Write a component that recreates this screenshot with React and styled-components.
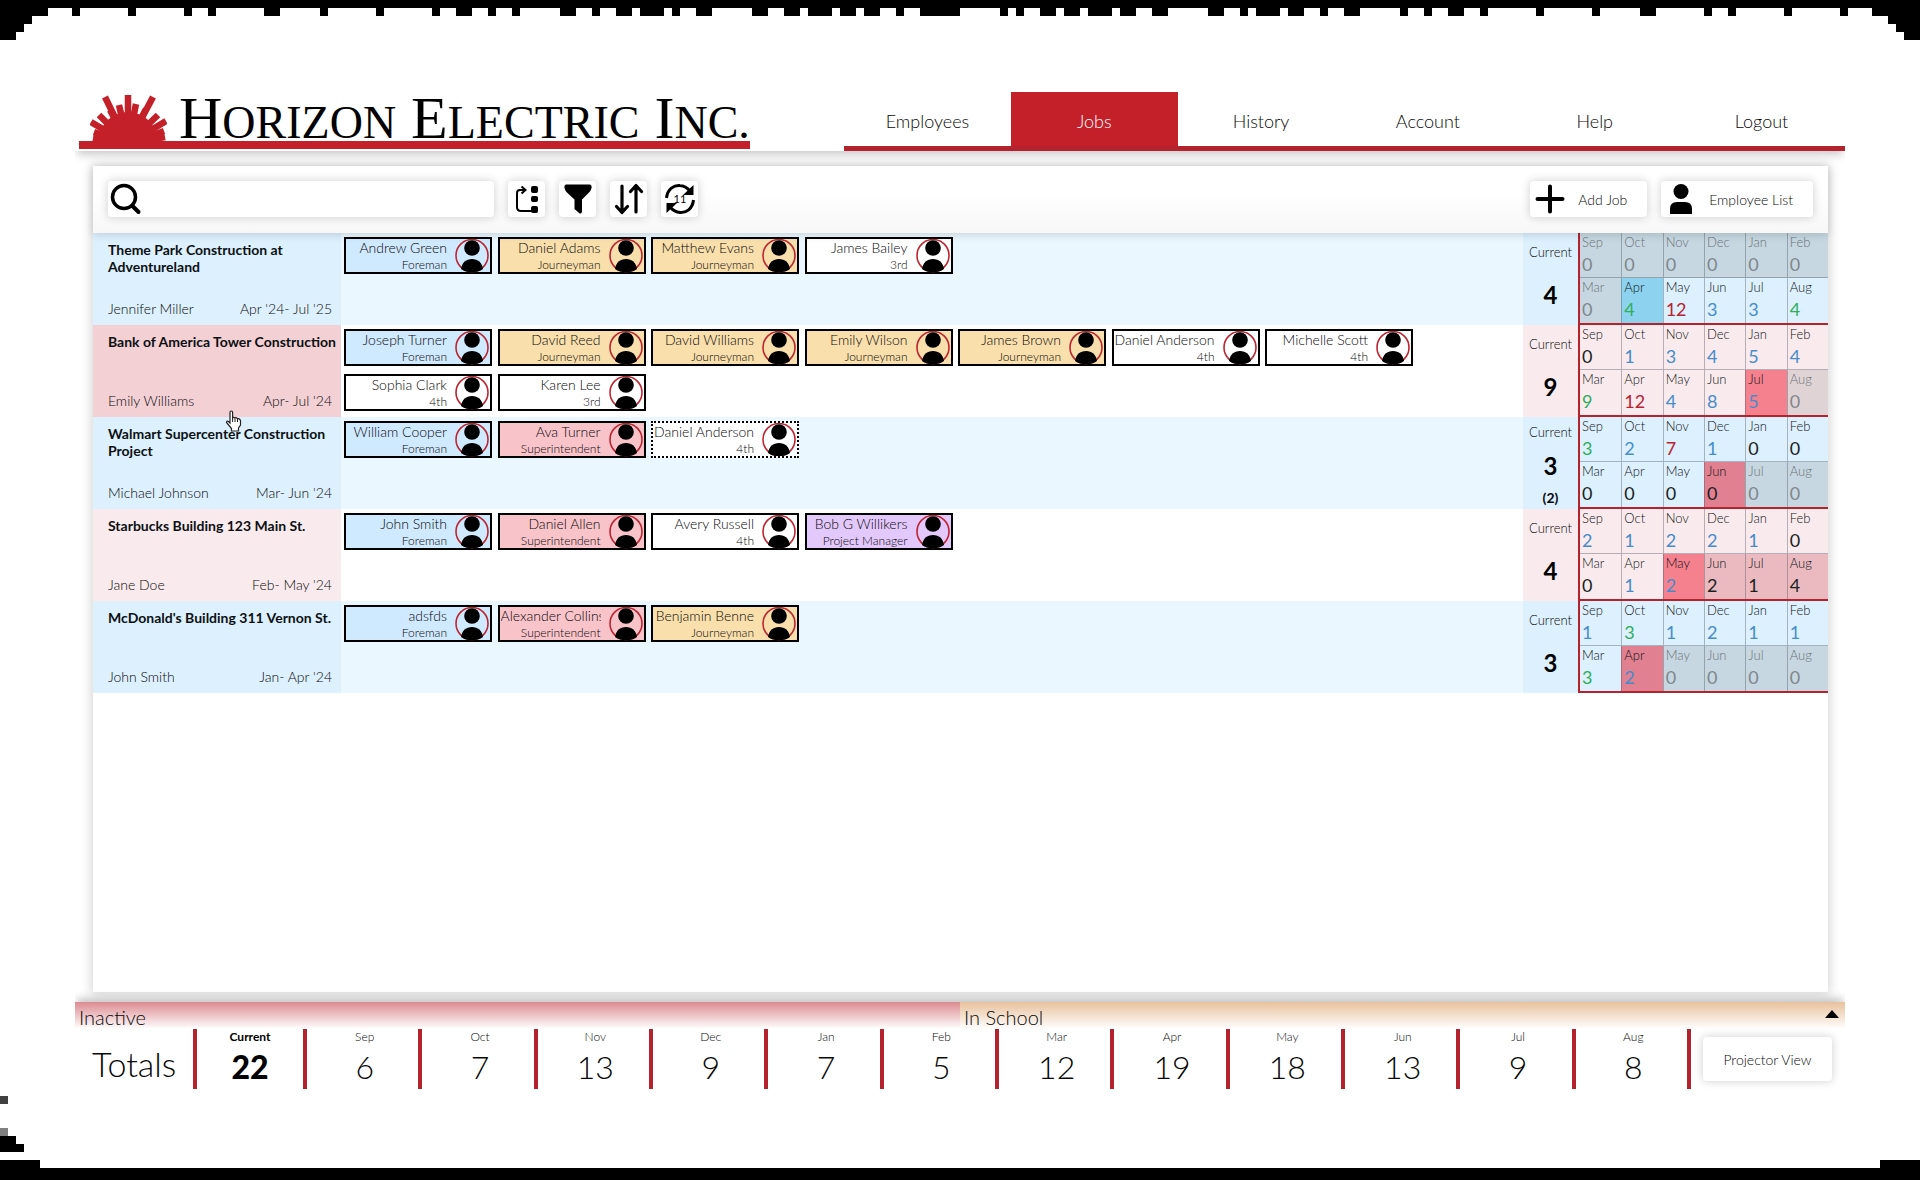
import React from "react";
import styled, { createGlobalStyle, css } from "styled-components";

const RED = "#b4232d";
const MONTHS = ["Sep", "Oct", "Nov", "Dec", "Jan", "Feb", "Mar", "Apr", "May", "Jun", "Jul", "Aug"];

const ROLE_COLORS = {
  Foreman: "#cfe9fe",
  Journeyman: "#f9dfac",
  Superintendent: "#f9c3ca",
  "Project Manager": "#e3c8fb",
};

const COUNT_COLORS = { g: "#2fae5c", b: "#468ccb", r: "#b92233", k: "#1b1f22", x: "#80878b" };

const CELL_COLORS = {
  blue: { plain: "transparent", off: "#c6d7e1", now: "#8dd3ef", end: "#e08091", after: "#c6d7e1" },
  pink: { plain: "transparent", off: "#e0d3d6", now: "#f5818f", end: "#f5818f", after: "#ebbac1" },
};

/* Each month is "count, count colour, cell kind". */
const JOBS = [
  {
    title: "Theme Park Construction at Adventureland",
    lead: "Jennifer Miller",
    dates: "Apr '24- Jul '25",
    tone: "blue",
    current: 4,
    crew: [["Andrew Green", "Foreman"], ["Daniel Adams", "Journeyman"], ["Matthew Evans", "Journeyman"], ["James Bailey", "3rd"]],
    months: "0 x off,0 x off,0 x off,0 x off,0 x off,0 x off,0 x off,4 g now,12 r plain,3 b plain,3 b plain,4 g plain",
  },
  {
    title: "Bank of America Tower Construction",
    lead: "Emily Williams",
    dates: "Apr- Jul '24",
    tone: "pink",
    hovered: true,
    current: 9,
    crew: [
      ["Joseph Turner", "Foreman"], ["David Reed", "Journeyman"], ["David Williams", "Journeyman"],
      ["Emily Wilson", "Journeyman"], ["James Brown", "Journeyman"], ["Daniel Anderson", "4th"],
      ["Michelle Scott", "4th"], ["Sophia Clark", "4th"], ["Karen Lee", "3rd"],
    ],
    months: "0 k plain,1 b plain,3 b plain,4 b plain,5 b plain,4 b plain,9 g plain,12 r plain,4 b plain,8 b plain,5 b end,0 x off",
  },
  {
    title: "Walmart Supercenter Construction Project",
    lead: "Michael Johnson",
    dates: "Mar- Jun '24",
    tone: "blue",
    current: 3,
    pending: "(2)",
    crew: [["William Cooper", "Foreman"], ["Ava Turner", "Superintendent"], ["Daniel Anderson", "4th", true]],
    months: "3 g plain,2 b plain,7 r plain,1 b plain,0 k plain,0 k plain,0 k plain,0 k plain,0 k plain,0 k end,0 x off,0 x off",
  },
  {
    title: "Starbucks Building 123 Main St.",
    lead: "Jane Doe",
    dates: "Feb- May '24",
    tone: "pink",
    current: 4,
    crew: [["John Smith", "Foreman"], ["Daniel Allen", "Superintendent"], ["Avery Russell", "4th"], ["Bob G Willikers", "Project Manager"]],
    months: "2 b plain,1 b plain,2 b plain,2 b plain,1 b plain,0 k plain,0 k plain,1 b plain,2 b end,2 k after,1 k after,4 k after",
  },
  {
    title: "McDonald's Building 311 Vernon St.",
    lead: "John Smith",
    dates: "Jan- Apr '24",
    tone: "blue",
    current: 3,
    crew: [["adsfds", "Foreman"], ["Alexander Collins", "Superintendent"], ["Benjamin Benne", "Journeyman"]],
    months: "1 b plain,3 g plain,1 b plain,2 b plain,1 b plain,1 b plain,3 g plain,2 b end,0 x off,0 x off,0 x off,0 x off",
  },
];

const TOTALS = [6, 7, 13, 9, 7, 5, 12, 19, 18, 13, 9, 8];

const GlobalStyle = createGlobalStyle`
  *, *::before, *::after { box-sizing: border-box; }
  body {
    margin: 0;
    background: #fff;
    color: #080808;
    font-family: Lato, "Open Sans", sans-serif;
    font-weight: 300;
  }
  button, input { font: inherit; color: inherit; }
`;

const Page = styled.div`
  min-height: 100vh;
  padding: 92px 75px 91px;
  display: flex;
`;

const Shell = styled.div`
  flex: 1;
  min-width: 0;
  display: flex;
  flex-direction: column;
`;

const Header = styled.header`
  display: flex;
  height: 59px;
  box-shadow: 0 6px 8px -2px rgba(0, 0, 0, 0.2);
  clip-path: inset(-20px 0);
`;

const Logo = styled.a`
  flex: none;
  display: flex;
  width: 671px;
  height: 57px;
  margin-left: 4px;
  padding-left: 11px;
  border-bottom: 8px solid #c4202a;
  color: #000;
  text-decoration: none;
`;

const LogoText = styled.span`
  margin-left: 12px;
  font: 400 60px/52px "Liberation Serif", serif;
  white-space: nowrap;
`;

const SmallCaps = styled.span`
  font-size: 46px;
`;

const Nav = styled.nav`
  flex: 1;
  margin-left: 94px;
  display: grid;
  grid-template-columns: repeat(6, 1fr);
  border-bottom: 5px solid ${RED};
`;

const NavLink = styled.a`
  display: flex;
  align-items: center;
  justify-content: center;
  padding-top: 3px;
  font-size: 18px;
  text-decoration: none;
  color: ${(p) => (p.$active ? "#fff" : "#080808")};
  background: ${(p) => (p.$active ? "#c4202a" : "transparent")};
`;

const Panel = styled.main`
  flex: 1;
  margin: 15px 17px 10px 18px;
  background: #fff;
  box-shadow: 0 0 10px 2px rgba(0, 0, 0, 0.16);
`;

const Toolbar = styled.div`
  position: relative;
  z-index: 1;
  display: flex;
  gap: 14px;
  padding: 15px 15px 16px;
  background: linear-gradient(#fff, #fff 40%, #f7f7f7);
  box-shadow: 0 2px 8px rgba(0, 0, 0, 0.14);
`;

const raised = css`
  height: 36px;
  border: 0;
  border-radius: 4px;
  background: #fff;
  box-shadow: 0 0 8px 1px rgba(0, 0, 0, 0.16);
`;

const SearchBox = styled.label`
  ${raised}
  display: flex;
  align-items: center;
  width: 386px;
  padding-left: 2px;
`;

const SearchInput = styled.input`
  flex: 1;
  min-width: 0;
  border: 0;
  outline: 0;
  background: transparent;
  font-size: 18px;
`;

const IconButton = styled.button`
  ${raised}
  display: grid;
  place-items: center;
  width: 37px;
  padding: 0;
`;

const TextButton = styled.button`
  ${raised}
  display: flex;
  align-items: center;
  gap: 13px;
  padding: 0 20px 0 5px;
  font-size: 14px;
  white-space: nowrap;
`;

const Spacer = styled.div`
  flex: 1;
`;

const JobList = styled.ul`
  margin: 0;
  padding: 0;
  list-style: none;
`;

const JobRow = styled.li`
  position: relative;
  display: grid;
  grid-template-columns: 248px 1fr 55px 250px;
  min-height: 92px;
  background: ${(p) => (p.$tone === "blue" ? "#eaf7ff" : "#fff")};
`;

const tinted = css`
  background: ${(p) => (p.$hovered ? "#f2d0d4" : p.$tone === "blue" ? "#dcf0fe" : "#f9ebed")};
`;

const JobInfo = styled.div`
  ${tinted}
  display: flex;
  flex-direction: column;
  justify-content: space-between;
  padding: 8px 0 8px 15px;
`;

const JobTitle = styled.h2`
  margin: 0;
  font-size: 14px;
  line-height: 17px;
  font-weight: 700;
  color: #0c1013;
`;

const JobMeta = styled.div`
  display: flex;
  justify-content: space-between;
  padding-right: 9px;
  font-size: 14px;
  line-height: 17px;
`;

const Crew = styled.div`
  display: grid;
  grid-template-columns: repeat(7, 148px);
  justify-content: space-between;
  align-content: start;
  row-gap: 8px;
  max-width: 1072px;
  padding: 4px 0 3px 3px;
`;

const Card = styled.div`
  display: flex;
  height: 37px;
  padding-left: 1px;
  border: 2px ${(p) => (p.$pending ? "dotted" : "solid")} #000;
  background: ${(p) => ROLE_COLORS[p.$role] || "#fff"};
`;

const CardText = styled.div`
  width: 100px;
  margin-right: 8px;
  text-align: right;
  white-space: nowrap;
  overflow: hidden;
`;

const CardName = styled.div`
  font-size: 14px;
  line-height: 18px;
`;

const CardRole = styled.div`
  font-size: 12px;
  line-height: 15px;
`;

const Current = styled.div`
  ${tinted}
  display: flex;
  flex-direction: column;
  align-items: center;
  justify-content: space-around;
  padding-bottom: ${(p) => (p.$pending ? 0 : 6)}px;
`;

const CurrentLabel = styled.span`
  font-size: 13px;
  line-height: 22px;
`;

const CurrentCount = styled.strong`
  font-size: 24px;
  line-height: 32px;
  font-weight: 700;
  color: #000;
`;

const PendingCount = styled.strong`
  font-size: 14px;
  line-height: 17px;
  font-weight: 700;
`;

const MonthTable = styled.table`
  width: 100%;
  height: 92px;
  table-layout: fixed;
  border-spacing: 0;
  border-left: 2px solid ${RED};
  border-bottom: 2px solid ${RED};
  background: ${(p) => (p.$tone === "blue" ? "#dcf0fe" : "#f9ebed")};
`;

const MonthCell = styled.td`
  height: 45px;
  padding: 0 0 0 2px;
  vertical-align: top;
  background: ${(p) => CELL_COLORS[p.$tone][p.$kind]};
  color: ${(p) => (p.$kind === "off" ? "#6c7377" : "#101214")};
  border-left: 1px solid rgba(70, 80, 90, 0.38);

  &:first-child { border-left: 0; }
  tr:first-child > & { border-bottom: 1px solid rgba(70, 80, 90, 0.38); }
`;

const MonthName = styled.div`
  padding-top: 1px;
  font-size: 13px;
  line-height: 17px;
`;

const MonthCount = styled.div`
  font-size: 18px;
  line-height: 26px;
  font-weight: 400;
  color: ${(p) => COUNT_COLORS[p.$color]};
`;

const Footer = styled.footer`
  box-shadow: 0 -6px 8px -2px rgba(0, 0, 0, 0.22);
  clip-path: inset(-20px 0 0);
`;

const Drawers = styled.div`
  display: grid;
  grid-template-columns: 1fr 1fr;
`;

const Drawer = styled.button`
  display: flex;
  align-items: center;
  justify-content: space-between;
  height: 27px;
  padding: 3px 6px 0 4px;
  border: 0;
  font-size: 20px;
  line-height: 22px;
  text-align: left;
  background: linear-gradient(${(p) => p.$color}, #fff);
`;

const Triangle = styled.span`
  border: 7px solid transparent;
  border-top: 0;
  border-bottom: 8px solid #000;
  margin-bottom: 6px;
`;

const Totals = styled.div`
  display: grid;
  grid-template-columns: 122px 110px repeat(12, 1fr) 154px;
  grid-template-rows: 100%;
  height: 60px;
`;

const TotalsLabel = styled.div`
  display: flex;
  align-items: center;
  padding: 9px 0 0 17px;
  border-right: 4px solid ${RED};
  font-size: 34px;
  line-height: 44px;
`;

const Total = styled.div`
  display: flex;
  flex-direction: column;
  align-items: center;
  padding-left: ${(p) => (p.$strong ? 0 : 4)}px;
  border-right: 4px solid ${RED};
  font-weight: ${(p) => (p.$strong ? 900 : 300)};
  color: ${(p) => (p.$strong ? "#000" : "inherit")};
`;

const TotalMonth = styled.span`
  font-size: 12px;
  line-height: 16px;
  font-weight: ${(p) => (p.$strong ? 700 : 300)};
`;

const TotalCount = styled.span`
  font-size: 32px;
  line-height: 44px;
`;

const ProjectorButton = styled.button`
  ${raised}
  align-self: start;
  width: 129px;
  height: 44px;
  margin: 8px 0 0 12px;
  font-size: 14px;
`;

const Cursor = styled.svg`
  position: absolute;
  left: 132px;
  top: 85px;
  z-index: 1;
`;

const AvatarSvg = styled.svg`
  flex: none;
`;

const EdgeSvg = styled.svg`
  position: fixed;
  left: 0;
  width: 100%;
  pointer-events: none;
  ${(p) => (p.$bottom ? "bottom: 0;" : "top: 0;")}
`;

/* Runs of dark blocks along the top edge, in steps of 1/240 of the width. */
const TEETH = [
  [0, 6], [9, 10], [16, 17], [23, 24], [26, 27], [33, 35], [40, 41], [47, 48], [54, 55], [57, 59],
  [61, 62], [64, 65], [70, 72], [74, 75], [77, 79], [80, 83], [84, 85], [87, 89], [94, 96], [98, 100],
  [101, 104], [105, 107], [108, 110], [112, 113], [115, 120], [125, 126], [127, 128], [130, 132],
  [133, 135], [136, 139], [140, 142], [144, 146], [151, 153], [155, 156], [157, 160], [161, 163],
  [165, 166], [168, 170], [175, 176], [178, 179], [181, 183], [185, 186], [192, 193], [199, 200],
  [205, 207], [213, 214], [216, 217], [223, 224], [230, 231], [234, 240],
];

function TopEdge() {
  return (
    <EdgeSvg height="40" viewBox="0 0 240 5" preserveAspectRatio="none" shapeRendering="crispEdges" aria-hidden="true">
      <rect width="240" height="1" />
      {TEETH.map(([a, b]) => <rect key={a} x={a} y="1" width={b - a} height="1" />)}
      <path d="M0 2H4V3H3V4H2V5H0ZM240 2H236V3H237V4H238V5H240Z" />
    </EdgeSvg>
  );
}

function BottomEdge() {
  return (
    <EdgeSvg $bottom height="84" viewBox="0 0 1920 84" preserveAspectRatio="none" shapeRendering="crispEdges" aria-hidden="true">
      <rect y="0" width="8" height="8" fill="#404040" />
      <rect y="32" width="8" height="8" fill="#808080" />
      <path d="M0 40H16V48H24V56H0ZM0 64H40V72H1880V64H1920V84H0Z" />
    </EdgeSvg>
  );
}

function Sunburst() {
  const rays = [
    [105, 99], [128, 97], [153, 99], [119, 107], [136, 106], [110, 112], [146, 111], [99, 117], [158, 117],
    [91, 124], [166, 123], [94, 134], [164, 133], [93, 140], [165, 139],
  ];
  return (
    <svg width="77" height="49" viewBox="90 94 77 49" aria-hidden="true">
      <g stroke="#c4202a" strokeWidth="6.500">
        {rays.map(([x, y]) => <path key={`${x}-${y}`} d={`M128 146L${x} ${y}`} />)}
      </g>
      <ellipse cx="128" cy="142" rx="29" ry="28" fill="#c4202a" />
    </svg>
  );
}

function Avatar() {
  return (
    <AvatarSvg width="34" height="34" viewBox="0 0 34 34" aria-hidden="true">
      <circle cx="17" cy="16.500" r="16" fill="none" stroke="#bd2530" strokeWidth="1.600" />
      <circle cx="17" cy="9" r="7.800" />
      <path d="M6 30C7 23.500 11 20 17 20S27 23.500 28 30C25 32.500 21.500 33 17 33S9 32.500 6 30Z" />
    </AvatarSvg>
  );
}

const SearchIcon = () => (
  <svg width="32" height="32" viewBox="0 0 32 32" fill="none" stroke="#000" strokeLinecap="round" aria-hidden="true">
    <circle cx="14" cy="14" r="11.500" strokeWidth="3.500" />
    <path d="M22.500 23L28.500 29" strokeWidth="4" />
  </svg>
);

const TreeIcon = () => (
  <svg width="32" height="32" viewBox="0 0 32 32" aria-hidden="true">
    <path d="M14 7H9Q6 7 6 10V24Q6 28 10 28H21M10.500 3.500L14.500 7L10.500 10.500" fill="none" stroke="#000" strokeWidth="2" />
    <rect x="20" y="3" width="7" height="7" rx="2" />
    <rect x="20" y="13" width="7" height="6" rx="2" />
    <rect x="20" y="23" width="7" height="7" rx="2" />
  </svg>
);

const FilterIcon = () => (
  <svg width="32" height="32" viewBox="0 0 32 32" aria-hidden="true">
    <path d="M4 1.500H28Q30 2 29.500 5Q29 8 25 11.500L20 16.500V29Q19 31.500 17 30L12.500 26V16.500L7 11.500Q3 8 2.500 5Q2 2 4 1.500Z" />
  </svg>
);

const SortIcon = () => (
  <svg width="32" height="32" viewBox="0 0 32 32" fill="none" stroke="#000" strokeWidth="3.200" strokeLinecap="round" strokeLinejoin="round" aria-hidden="true">
    <path d="M9 3V29M3.500 23.500L9 29.500L14.500 23.500M23 29V3M17.500 8.500L23 2.500L28.500 8.500" />
  </svg>
);

const RefreshIcon = () => (
  <svg width="32" height="32" viewBox="0 0 32 32" aria-hidden="true">
    <path d="M2.500 15C3.500 6 10 2 16 2.500C20 2.700 23 4.500 26 8M29.500 17C28.500 26 22 30 16 29.500C12 29.300 9 27.500 6 24" fill="none" stroke="#000" strokeWidth="3" />
    <path d="M29.500 2V12H19ZM2.500 30V20H13Z" />
    <text x="16" y="20" fontSize="11" fontWeight="400" textAnchor="middle">11</text>
  </svg>
);

const PlusIcon = () => (
  <svg width="30" height="30" viewBox="0 0 30 30" stroke="#000" strokeWidth="4" strokeLinecap="round" aria-hidden="true">
    <path d="M15 2.500V27.500M2.500 15H27.500" />
  </svg>
);

const PersonIcon = () => (
  <svg width="30" height="30" viewBox="0 0 30 30" aria-hidden="true">
    <circle cx="15" cy="7.500" r="7.500" />
    <path d="M4 30V25Q4 18 11 18H19Q26 18 26 25V30Z" />
  </svg>
);

function HandCursor() {
  return (
    <Cursor width="17" height="22" viewBox="0 0 17 22" aria-hidden="true">
      <path
        d="M5 13V2.500Q5 1 6.300 1T7.600 2.500V8Q8.500 6.800 10 8Q11.200 7.200 12.500 8.700Q14.500 8 15.500 10.500V15L13.500 18V21H6.500V18.500L1.500 12.500Q1.500 10.500 3.500 11.500Z"
        fill="#fff" stroke="#222" strokeWidth="1.200"
      />
      <path d="M7.600 8V12M10 8.500V12M12.500 9V12" fill="none" stroke="#222" strokeWidth="1" />
    </Cursor>
  );
}

function EmployeeCard({ name, role, pending }) {
  return (
    <Card $role={role} $pending={pending}>
      <CardText>
        <CardName>{name}</CardName>
        <CardRole>{role}</CardRole>
      </CardText>
      <Avatar />
    </Card>
  );
}

function Months({ tone, months }) {
  const cells = months.split(",").map((m, i) => [MONTHS[i], ...m.split(" ")]);
  return (
    <MonthTable $tone={tone}>
      <tbody>
        {[cells.slice(0, 6), cells.slice(6)].map((line, i) => (
          <tr key={i}>
            {line.map(([month, count, color, kind]) => (
              <MonthCell key={month} $tone={tone} $kind={kind}>
                <MonthName>{month}</MonthName>
                <MonthCount $color={color}>{count}</MonthCount>
              </MonthCell>
            ))}
          </tr>
        ))}
      </tbody>
    </MonthTable>
  );
}

function Job({ job }) {
  return (
    <JobRow $tone={job.tone}>
      <JobInfo $tone={job.tone} $hovered={job.hovered}>
        <JobTitle>{job.title}</JobTitle>
        <JobMeta>
          <span>{job.lead}</span>
          <span>{job.dates}</span>
        </JobMeta>
      </JobInfo>
      <Crew>
        {job.crew.map(([name, role, pending]) => (
          <EmployeeCard key={name} name={name} role={role} pending={pending} />
        ))}
      </Crew>
      <Current $tone={job.tone} $pending={job.pending}>
        <CurrentLabel>Current</CurrentLabel>
        <CurrentCount>{job.current}</CurrentCount>
        {job.pending && <PendingCount>{job.pending}</PendingCount>}
      </Current>
      <Months tone={job.tone} months={job.months} />
      {job.hovered && <HandCursor />}
    </JobRow>
  );
}

export default function App() {
  return (
    <>
      <GlobalStyle />
      <TopEdge />
      <Page>
        <Shell>
          <Header>
            <Logo href="#home">
              <Sunburst />
              <LogoText>
                H<SmallCaps>ORIZON</SmallCaps> E<SmallCaps>LECTRIC</SmallCaps> I<SmallCaps>NC.</SmallCaps>
              </LogoText>
            </Logo>
            <Nav>
              {["Employees", "Jobs", "History", "Account", "Help", "Logout"].map((item) => (
                <NavLink key={item} href={`#${item.toLowerCase()}`} $active={item === "Jobs"}>{item}</NavLink>
              ))}
            </Nav>
          </Header>
          <Panel>
            <Toolbar>
              <SearchBox>
                <SearchIcon />
                <SearchInput type="text" aria-label="Search jobs" />
              </SearchBox>
              <IconButton aria-label="Group"><TreeIcon /></IconButton>
              <IconButton aria-label="Filter"><FilterIcon /></IconButton>
              <IconButton aria-label="Sort"><SortIcon /></IconButton>
              <IconButton aria-label="Refresh"><RefreshIcon /></IconButton>
              <Spacer />
              <TextButton><PlusIcon />Add Job</TextButton>
              <TextButton><PersonIcon />Employee List</TextButton>
            </Toolbar>
            <JobList>
              {JOBS.map((job) => <Job key={job.title} job={job} />)}
            </JobList>
          </Panel>
          <Footer>
            <Drawers>
              <Drawer $color="#dc8b91">Inactive</Drawer>
              <Drawer $color="#e8c19c">In School<Triangle /></Drawer>
            </Drawers>
            <Totals>
              <TotalsLabel>Totals</TotalsLabel>
              <Total $strong>
                <TotalMonth $strong>Current</TotalMonth>
                <TotalCount>22</TotalCount>
              </Total>
              {TOTALS.map((count, i) => (
                <Total key={MONTHS[i]}>
                  <TotalMonth>{MONTHS[i]}</TotalMonth>
                  <TotalCount>{count}</TotalCount>
                </Total>
              ))}
              <ProjectorButton>Projector View</ProjectorButton>
            </Totals>
          </Footer>
        </Shell>
      </Page>
      <BottomEdge />
    </>
  );
}
